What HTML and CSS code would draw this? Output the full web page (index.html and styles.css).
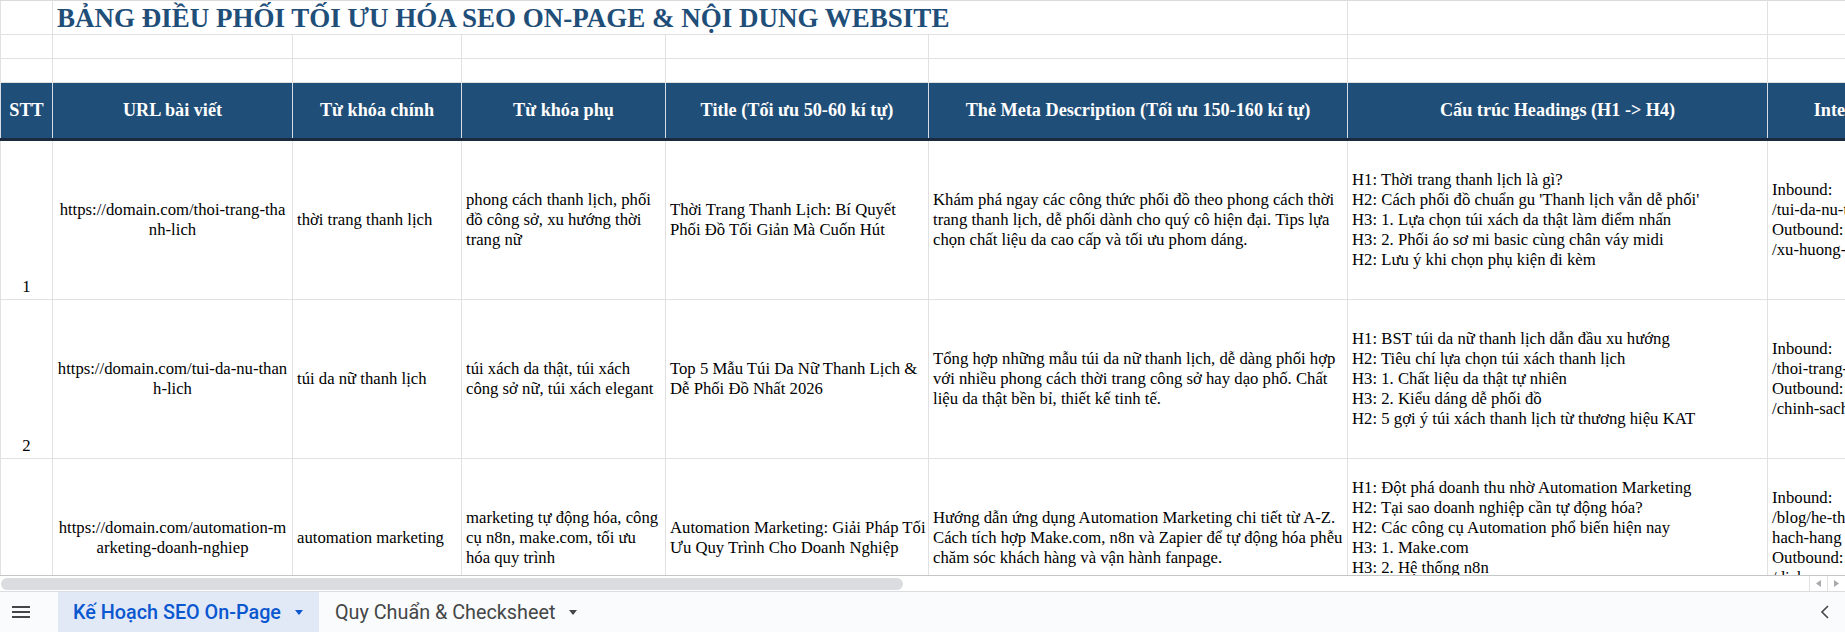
FILE: index.html
```html
<!DOCTYPE html>
<html lang="vi">
<head>
    <meta charset="UTF-8">
    <title>Kế Hoạch SEO On-Page</title>
    <link rel="stylesheet" href="styles.css">
</head>
<body>
<div class="app">

    <!-- Sheet grid -->
    <div class="grid">
        <table class="sheet">
            <colgroup>
                <col class="c-stt">
                <col class="c-url">
                <col class="c-kw">
                <col class="c-kw2">
                <col class="c-title">
                <col class="c-meta">
                <col class="c-head">
                <col class="c-link">
            </colgroup>
            <tr class="r-title">
                <td></td>
                <td colspan="5" class="title">BẢNG ĐIỀU PHỐI TỐI ƯU HÓA SEO ON-PAGE &amp; NỘI DUNG WEBSITE</td>
                <td></td>
                <td></td>
            </tr>
            <tr class="r-empty"><td></td><td></td><td></td><td></td><td></td><td></td><td></td><td></td></tr>
            <tr class="r-empty"><td></td><td></td><td></td><td></td><td></td><td></td><td></td><td></td></tr>
            <tr class="r-head">
                <th>STT</th>
                <th>URL bài viết</th>
                <th>Từ khóa chính</th>
                <th>Từ khóa phụ</th>
                <th>Title (Tối ưu 50-60 kí tự)</th>
                <th>Thẻ Meta Description (Tối ưu 150-160 kí tự)</th>
                <th>Cấu trúc Headings (H1 -&gt; H4)</th>
                <th>Internal Link</th>
            </tr>
            <tr class="r-data">
                <td class="stt">1</td>
                <td class="url">https://domain.com/thoi-trang-tha<br>nh-lich</td>
                <td>thời trang thanh lịch</td>
                <td>phong cách thanh lịch, phối<br>đồ công sở, xu hướng thời<br>trang nữ</td>
                <td>Thời Trang Thanh Lịch: Bí Quyết<br>Phối Đồ Tối Giản Mà Cuốn Hút</td>
                <td>Khám phá ngay các công thức phối đồ theo phong cách thời<br>trang thanh lịch, dễ phối dành cho quý cô hiện đại. Tips lựa<br>chọn chất liệu da cao cấp và tối ưu phom dáng.</td>
                <td>H1: Thời trang thanh lịch là gì?<br>H2: Cách phối đồ chuẩn gu 'Thanh lịch vẫn dễ phối'<br>H3: 1. Lựa chọn túi xách da thật làm điểm nhấn<br>H3: 2. Phối áo sơ mi basic cùng chân váy midi<br>H2: Lưu ý khi chọn phụ kiện đi kèm</td>
                <td>Inbound:<br>/tui-da-nu-thanh-lich<br>Outbound:<br>/xu-huong-thoi-trang</td>
            </tr>
            <tr class="r-data">
                <td class="stt">2</td>
                <td class="url">https://domain.com/tui-da-nu-than<br>h-lich</td>
                <td>túi da nữ thanh lịch</td>
                <td>túi xách da thật, túi xách<br>công sở nữ, túi xách elegant</td>
                <td>Top 5 Mẫu Túi Da Nữ Thanh Lịch &amp;<br>Dễ Phối Đồ Nhất 2026</td>
                <td>Tổng hợp những mẫu túi da nữ thanh lịch, dễ dàng phối hợp<br>với nhiều phong cách thời trang công sở hay dạo phố. Chất<br>liệu da thật bền bỉ, thiết kế tinh tế.</td>
                <td>H1: BST túi da nữ thanh lịch dẫn đầu xu hướng<br>H2: Tiêu chí lựa chọn túi xách thanh lịch<br>H3: 1. Chất liệu da thật tự nhiên<br>H3: 2. Kiểu dáng dễ phối đồ<br>H2: 5 gợi ý túi xách thanh lịch từ thương hiệu KAT</td>
                <td>Inbound:<br>/thoi-trang-thanh-lich<br>Outbound:<br>/chinh-sach-bao-hanh</td>
            </tr>
            <tr class="r-data">
                <td class="stt">3</td>
                <td class="url">https://domain.com/automation-m<br>arketing-doanh-nghiep</td>
                <td>automation marketing</td>
                <td>marketing tự động hóa, công<br>cụ n8n, make.com, tối ưu<br>hóa quy trình</td>
                <td>Automation Marketing: Giải Pháp Tối<br>Ưu Quy Trình Cho Doanh Nghiệp</td>
                <td>Hướng dẫn ứng dụng Automation Marketing chi tiết từ A-Z.<br>Cách tích hợp Make.com, n8n và Zapier để tự động hóa phễu<br>chăm sóc khách hàng và vận hành fanpage.</td>
                <td>H1: Đột phá doanh thu nhờ Automation Marketing<br>H2: Tại sao doanh nghiệp cần tự động hóa?<br>H2: Các công cụ Automation phổ biến hiện nay<br>H3: 1. Make.com<br>H3: 2. Hệ thống n8n<br>H3: 3. Zapier</td>
                <td>Inbound:<br>/blog/he-thong-cham-soc-k<br>hach-hang<br>Outbound:<br>/dich-vu-seo</td>
            </tr>
        </table>
    </div>

    <!-- Horizontal scrollbar -->
    <div class="hscroll">
        <div class="thumb"></div>
        <div class="arrows">
            <span class="arrow">
                <svg width="5" height="7" viewBox="0 0 5 7"><path d="M5 0 L0 3.5 L5 7 Z" fill="#a8abae"/></svg>
            </span>
            <span class="arrow">
                <svg width="5" height="7" viewBox="0 0 5 7"><path d="M0 0 L5 3.5 L0 7 Z" fill="#a8abae"/></svg>
            </span>
        </div>
    </div>

    <!-- Sheet tabs -->
    <div class="tabs">
        <div class="menu">
            <svg width="18" height="12" viewBox="0 0 18 12">
                <rect x="0" y="0" width="18" height="2" fill="#444746"/>
                <rect x="0" y="5" width="18" height="2" fill="#444746"/>
                <rect x="0" y="10" width="18" height="2" fill="#444746"/>
            </svg>
        </div>
        <div class="tab active">Kế Hoạch SEO On-Page <span class="caret"></span></div>
        <div class="tab">Quy Chuẩn &amp; Checksheet <span class="caret"></span></div>
        <div class="tab-nav">
            <svg width="10" height="14" viewBox="0 0 10 14">
                <path d="M8 1 L2 7 L8 13" fill="none" stroke="#444746" stroke-width="1.6"/>
            </svg>
        </div>
    </div>

</div>
</body>
</html>
```

FILE: styles.css
```css
body {
    margin: 0;
    overflow: hidden;
    font-family: "Liberation Serif", "Times New Roman", serif;
    background: #fff;
}
.app {
    width: 1845px;
    height: 632px;
    display: flex;
    flex-direction: column;
    overflow: hidden;
}
.grid {
    height: 575px;
    flex: none;
    overflow: hidden;
}
.sheet {
    width: 1965px;
    table-layout: fixed;
    border-collapse: collapse;
}
.c-stt { width: 52px; }
.c-url { width: 240px; }
.c-kw { width: 169px; }
.c-kw2 { width: 204px; }
.c-title { width: 263px; }
.c-meta { width: 419px; }
.c-head { width: 420px; }
.c-link { width: 198px; }

.sheet td, .sheet th {
    border: 1px solid #e1e1e1;
    padding: 0 4px;
    white-space: nowrap;
    overflow: hidden;
}
.r-title td {
    height: 33px;
    border-top-color: #dadada;
}
.title {
    font-size: 27px;
    font-weight: bold;
    color: #1f4e79;
    vertical-align: bottom;
    padding-bottom: 1px;
    overflow: visible;
}
.r-empty td {
    height: 23px;
}
.r-head th {
    height: 55px;
    background: #1f4e78;
    color: #fff;
    font-size: 18.2px;
    font-weight: bold;
    border-color: #d6dde6;
    border-bottom: 3px solid #1b2a3c;
}
.r-data td {
    height: 156px;
    font-size: 16.7px;
    line-height: 20px;
    color: #000;
    vertical-align: middle;
    text-align: left;
}
.r-data td.url {
    text-align: center;
}
.r-data td.stt {
    text-align: center;
    vertical-align: bottom;
    padding-bottom: 2px;
}

.hscroll {
    height: 15px;
    flex: none;
    display: flex;
    align-items: center;
    border-top: 1px solid #c4c7c5;
    border-bottom: 1px solid #dadce0;
    background: #fff;
}
.thumb {
    width: 902px;
    height: 12px;
    margin-left: 1px;
    border-radius: 6px;
    background: #dadce0;
}
.arrows {
    margin-left: auto;
    display: flex;
    height: 100%;
}
.arrow {
    width: 17px;
    border-left: 1px solid #e1e1e1;
    display: flex;
    align-items: center;
    justify-content: center;
}

.tabs {
    flex: 1;
    display: flex;
    background: #f9fbfd;
    font-family: Roboto, "Noto Sans", sans-serif;
    font-size: 19.8px;
    color: #444746;
}
.menu {
    width: 58px;
    display: flex;
    align-items: center;
    padding-left: 12px;
    box-sizing: border-box;
}
.tab {
    display: flex;
    align-items: center;
    padding: 0 16px 0 16px;
    gap: 10px;
}
.tab.active {
    background: #e1e9f7;
    color: #0b57d0;
    font-weight: 500;
    padding-left: 15px;
}
.caret {
    width: 0;
    height: 0;
    border-left: 4px solid transparent;
    border-right: 4px solid transparent;
    border-top: 5px solid currentColor;
    margin-left: 4px;
}
.tab-nav {
    margin-left: auto;
    width: 40px;
    display: flex;
    align-items: center;
    justify-content: center;
}
```
